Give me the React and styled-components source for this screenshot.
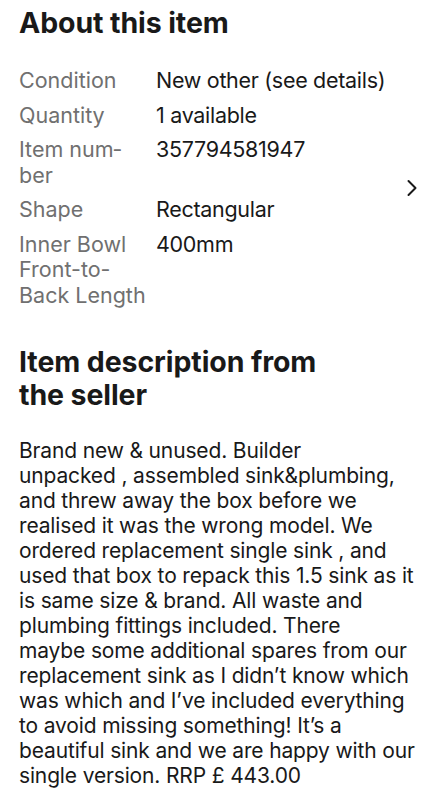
import { Fragment } from 'react'
import styled, { createGlobalStyle } from 'styled-components'

const GlobalStyle = createGlobalStyle`
  html, body {
    margin: 0;
    padding: 0;
    background: #fff;
  }
  body {
    font-family: Inter, 'Noto Sans', sans-serif;
    color: #191919;
  }
`

const Page = styled.main`
  padding: 6px 19px 0 19px;
`

const Heading = styled.h2`
  font-size: 28.5px;
  line-height: 33px;
  font-weight: 700;
  margin: ${p => (p.$gap ? p.$gap : 0)} 0 0;
  letter-spacing: -0.1px;
`

const Specs = styled.div`
  display: flex;
  align-items: center;
  margin-top: 29px;
`

const SpecList = styled.dl`
  flex: 1;
  margin: 0;
  display: grid;
  grid-template-columns: 127px 1fr;
  column-gap: 10px;
  row-gap: 9px;
  font-size: 21.5px;
  line-height: 25.5px;
`

const Label = styled.dt`
  color: #707070;
`

const Value = styled.dd`
  margin: 0;
  color: #191919;
  letter-spacing: -0.3px;
`

const Chevron = styled.svg`
  width: 12px;
  height: 18px;
  margin-right: 3px;
  flex: none;
`

const Description = styled.p`
  margin: 27px 0 0;
  font-size: 21px;
  line-height: 25px;
  letter-spacing: -0.15px;
  white-space: nowrap;
`

const specs = [
  ['Condition', 'New other (see details)'],
  ['Quantity', '1 available'],
  ['Item num\u00ADber', '357794581947'],
  ['Shape', 'Rectangular'],
  ['Inner Bowl Front-to-Back Length', '400mm'],
]

const lines = [
  'Brand new & unused. Builder',
  'unpacked , assembled sink&plumbing,',
  'and threw away the box before we',
  'realised it was the wrong model. We',
  'ordered replacement single sink , and',
  'used that box to repack this 1.5 sink as it',
  'is same size & brand. All waste and',
  'plumbing fittings included. There',
  'maybe some additional spares from our',
  'replacement sink as I didn’t know which',
  'was which and I’ve included everything',
  'to avoid missing something! It’s a',
  'beautiful sink and we are happy with our',
  'single version. RRP £ 443.00',
]

export default function App() {
  return (
    <>
      <GlobalStyle />
      <Page>
        <Heading>About this item</Heading>
        <Specs>
          <SpecList>
            {specs.map(([k, v]) => (
              <Fragment key={k}>
                <Label>{k}</Label>
                <Value>{v}</Value>
              </Fragment>
            ))}
          </SpecList>
          <Chevron viewBox="0 0 12 18" fill="none">
            <path d="M2.5 2l7 7-7 7" stroke="#191919" strokeWidth="2" strokeLinecap="round" strokeLinejoin="round" />
          </Chevron>
        </Specs>
        <Heading $gap="37px">Item description from<br />the seller</Heading>
        <Description>
          {lines.map((l, i) => (
            <Fragment key={i}>
              {l}
              {i < lines.length - 1 && <br />}
            </Fragment>
          ))}
        </Description>
      </Page>
    </>
  )
}
